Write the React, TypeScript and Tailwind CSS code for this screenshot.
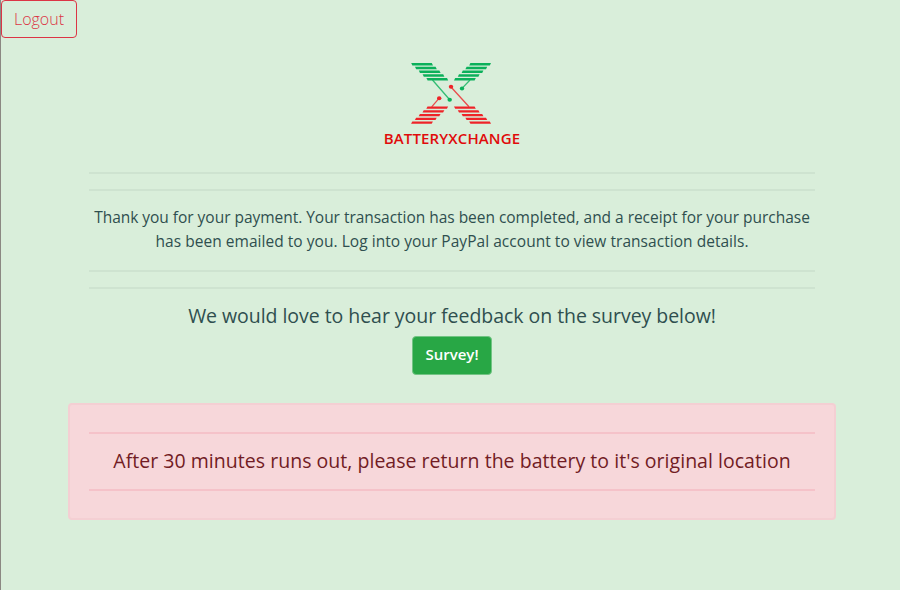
const GREEN = "#0bb05a";
const RED = "#ee2328";

function Logo() {
  const rows = [0, 1, 2, 3, 4];
  const bars = (x: number, y: number, dx: number, fill: string) =>
    rows.map((i) => {
      const s = dx > 0 ? 0.6 : -0.6;
      return (
        <path
          key={`${x}-${y}-${i}`}
          fill={fill}
          d={`M${x + i * dx - s} ${y + i * 3.75 - 1.2}h20.6l${2 * s} 2.4h-20.6z`}
        />
      );
    });
  return (
    <svg width="82" height="62" viewBox="0 0 82 62" className="block">
      {bars(0.8, 2.2, 3.8, GREEN)}
      {bars(58.8, 2.2, -3.8, GREEN)}
      {bars(15.9, 45.6, -3.8, RED)}
      {bars(43.6, 45.6, 3.8, RED)}
      <g fill="none" strokeWidth="1.3" strokeOpacity="0.8">
        <path d="M21.5 18L38.5 37.5M59 18L51 26.4" stroke={GREEN} />
        <path d="M40 25L58 44.8M20.7 44.8L28 36.3" stroke={RED} />
      </g>
      <g fill={GREEN}>
        <ellipse cx="38.7" cy="37.7" rx="2.2" ry="2" />
        <ellipse cx="51" cy="26.4" rx="2.2" ry="2" />
      </g>
      <g fill={RED}>
        <ellipse cx="40" cy="24.8" rx="2.2" ry="2" />
        <ellipse cx="28.2" cy="36.3" rx="2.2" ry="2" />
      </g>
    </svg>
  );
}

function Rule() {
  return <hr className="h-0.5 w-full border-0 bg-[#cee3d0]" />;
}

export default function App() {
  return (
    <div className="flex h-[590px] w-[900px] flex-col overflow-hidden border-l border-[#8b8882] bg-[#d9eeda] font-['Open_Sans',sans-serif] text-[#2f4f4f]">
      <header className="flex">
        <button className="h-[38px] w-[76px] rounded border border-[#dc3545] text-base font-light whitespace-nowrap text-[#dc3545]">
          Logout
        </button>
      </header>
      <main className="ml-[67px] flex w-[768px] flex-col items-center">
        <div className="flex flex-col items-center pt-6">
          <Logo />
          <h1 className="mt-0.5 text-[15px] leading-6 font-semibold tracking-[0.14px] whitespace-nowrap text-[#e00b0b]">
            BATTERYXCHANGE
          </h1>
        </div>
        <div className="flex w-[726px] flex-col items-center pt-[22px]">
          <Rule />
          <div className="h-[15px]" />
          <Rule />
          <div className="flex flex-col items-center pt-3.5 pb-[17px] text-[15.5px] leading-6 whitespace-nowrap">
            <p className="tracking-[-0.03px]">
              Thank you for your payment. Your transaction has been completed, and a receipt for your purchase
            </p>
            <p className="tracking-[0.04px]">
              has been emailed to you. Log into your PayPal account to view transaction details.
            </p>
          </div>
          <Rule />
          <div className="h-[15px]" />
          <Rule />
          <h2 className="mt-[15px] text-[19.5px] leading-6 tracking-[-0.045px] whitespace-nowrap">
            We would love to hear your feedback on the survey below!
          </h2>
          <button className="mt-2 h-[39px] w-20 rounded border border-[#72c483] bg-[#28a745] pb-0.5 text-[15px] font-semibold whitespace-nowrap text-white">
            Survey!
          </button>
        </div>
        <section className="mt-7 flex h-[117px] w-[768px] flex-col items-center rounded border-2 border-[#f4cfd3] bg-[#f7d7da] px-[19px] pt-[27px] text-[#721c24]">
          <hr className="h-0.5 w-full border-0 bg-[#f5c2c9]" />
          <h2 className="mt-3.5 mb-4 text-[19.5px] leading-[25px] tracking-[0.03px] whitespace-nowrap">
            After 30 minutes runs out, please return the battery to it's original location
          </h2>
          <hr className="h-0.5 w-full border-0 bg-[#f5c2c9]" />
        </section>
      </main>
    </div>
  );
}
